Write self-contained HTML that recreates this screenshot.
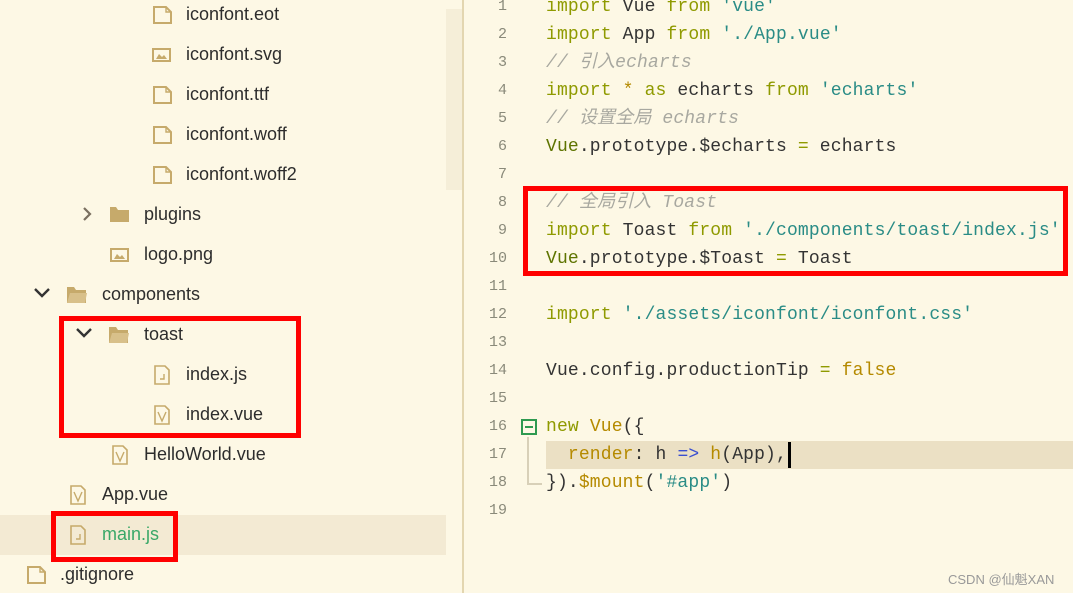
<!DOCTYPE html>
<html><head><meta charset="utf-8"><style>
body{margin:0;width:1073px;height:593px;background:#fdf8e5;position:relative;overflow:hidden;font-family:"Liberation Sans","Noto Sans CJK SC",sans-serif}
.r{position:absolute;font-size:18px;color:#2d2d2d;line-height:20px;white-space:nowrap}
.code{position:absolute;left:546px;font-family:"Liberation Mono","Noto Sans CJK SC",monospace;font-size:18px;letter-spacing:0.15px;color:#333;white-space:pre;line-height:28px}
.ln{position:absolute;left:470px;width:37px;text-align:right;font-family:"Liberation Mono",monospace;font-size:15px;color:#8a8a7a;line-height:28px}
.k{color:#8f9a00}.s{color:#2a8c86}.c{color:#a8a8a0;font-style:italic}.o{color:#b58a00}.v{color:#5e7400}
.box{position:absolute;border:5px solid #f00;box-sizing:border-box}
</style></head><body>
<div style="position:absolute;left:446px;top:9px;width:16px;height:181px;background:#f5eed8"></div>
<div style="position:absolute;left:0;top:515px;width:446px;height:40px;background:#f3ead3"></div>
<div style="position:absolute;left:462px;top:0;width:2px;height:593px;background:#e3d6b0"></div>

<svg width="470" height="593" style="position:absolute;left:0;top:0" fill="none" stroke="#c6aa6b" stroke-width="2">
<defs>
<g id="f"><path d="M1 1h12l5 5v11H1z"/><path d="M13 1v5h5" stroke-width="1.4"/></g>
<g id="im"><rect x="1" y="3" width="17" height="12"/><path d="M4 13l3-5 3 3 2-2 3 4z" fill="#c6aa6b" stroke="none"/></g>
<g id="j"><path d="M1 1h10l4 4v14H1z" stroke-width="1.6"/><path d="M10 9v5H6" stroke-width="1.4"/></g>
<g id="vv"><path d="M1 1h10l4 4v14H1z" stroke-width="1.6"/><path d="M4 7l4 9 4-9" stroke-width="1.4"/></g>
</defs>
<use href="#f" x="153" y="6"/>
<use href="#im" x="152" y="46"/>
<use href="#f" x="153" y="86"/>
<use href="#f" x="153" y="126"/>
<use href="#f" x="153" y="166"/>
<path d="M84 208l6 6-6 6" stroke="#7a7060" stroke-width="2.2"/>
<path d="M110 207h6l2 3h11v12h-19z" fill="#c6aa6b" stroke="none"/>
<use href="#im" x="110" y="246"/>
<path d="M35 289l7 7 7-7" stroke="#333" stroke-width="2.4"/>
<path d="M67 287h7l2 3h10v13H67z" fill="#c6aa6b" stroke="none"/><path d="M70 293h17l-2 10H67z" fill="#d8c08a" stroke="none"/>
<path d="M77 329l7 7 7-7" stroke="#333" stroke-width="2.4"/>
<path d="M109 327h7l2 3h10v13h-19z" fill="#c6aa6b" stroke="none"/><path d="M112 333h17l-2 10h-18z" fill="#d8c08a" stroke="none"/>
<use href="#j" x="154" y="365"/>
<use href="#vv" x="154" y="405"/>
<use href="#vv" x="112" y="445"/>
<use href="#vv" x="70" y="485"/>
<use href="#j" x="70" y="525"/>
<use href="#f" x="27" y="566"/>
</svg>

<div class="r" style="left:186px;top:4px">iconfont.eot</div>
<div class="r" style="left:186px;top:44px">iconfont.svg</div>
<div class="r" style="left:186px;top:84px">iconfont.ttf</div>
<div class="r" style="left:186px;top:124px">iconfont.woff</div>
<div class="r" style="left:186px;top:164px">iconfont.woff2</div>
<div class="r" style="left:144px;top:204px">plugins</div>
<div class="r" style="left:144px;top:244px">logo.png</div>
<div class="r" style="left:102px;top:284px">components</div>
<div class="r" style="left:144px;top:324px">toast</div>
<div class="r" style="left:186px;top:364px">index.js</div>
<div class="r" style="left:186px;top:404px">index.vue</div>
<div class="r" style="left:144px;top:444px">HelloWorld.vue</div>
<div class="r" style="left:102px;top:484px">App.vue</div>
<div class="r" style="left:102px;top:524px;color:#3aa868">main.js</div>
<div class="r" style="left:60px;top:564px">.gitignore</div>

<div class="box" style="left:59px;top:316px;width:242px;height:122px"></div>
<div class="box" style="left:51px;top:511px;width:127px;height:51px"></div>

<div style="position:absolute;left:546px;top:441px;width:527px;height:28px;background:#ebe0c4"></div>
<div style="position:absolute;left:788px;top:442px;width:3px;height:26px;background:#000"></div>

<div class="ln" style="top:-7px">1<br>2<br>3<br>4<br>5<br>6<br>7<br>8<br>9<br>10<br>11<br>12<br>13<br>14<br>15<br>16<br>17<br>18<br>19</div>
<div class="code" style="top:-7px"><span class="k">import</span> Vue <span class="k">from</span> <span class="s">'vue'</span>
<span class="k">import</span> App <span class="k">from</span> <span class="s">'./App.vue'</span>
<span class="c">// 引入echarts</span>
<span class="k">import</span> <span class="o">*</span> <span class="k">as</span> echarts <span class="k">from</span> <span class="s">'echarts'</span>
<span class="c">// 设置全局 echarts</span>
<span class="v">Vue</span>.prototype.$echarts <span class="k">=</span> echarts

<span class="c">// 全局引入 Toast</span>
<span class="k">import</span> Toast <span class="k">from</span> <span class="s">'./components/toast/index.js'</span>
<span class="v">Vue</span>.prototype.$Toast <span class="k">=</span> Toast

<span class="k">import</span> <span class="s">'./assets/iconfont/iconfont.css'</span>

Vue.config.productionTip <span class="k">=</span> <span class="o">false</span>

<span class="k">new</span> <span class="o">Vue</span>({
  <span class="o">render</span>: h <span style="color:#3b4fd0">=&gt;</span> <span class="o">h</span>(App),
}).<span class="o">$mount</span>(<span class="s">'#app'</span>)
</div>

<div style="position:absolute;left:521px;top:419px;width:16px;height:16px;border:2px solid #2e9a50;box-sizing:border-box"><div style="position:absolute;left:2px;top:5px;width:8px;height:2px;background:#2e9a50"></div></div>
<div style="position:absolute;left:527px;top:437px;width:13px;height:46px;border-left:2px solid #d8d0b8;border-bottom:2px solid #d8d0b8"></div>

<div class="box" style="left:523px;top:186px;width:545px;height:90px"></div>

<div style="position:absolute;left:948px;top:569px;font-size:13px;color:#999;font-family:'Liberation Sans','Noto Sans CJK SC',sans-serif">CSDN @仙魁XAN</div>
</body></html>
